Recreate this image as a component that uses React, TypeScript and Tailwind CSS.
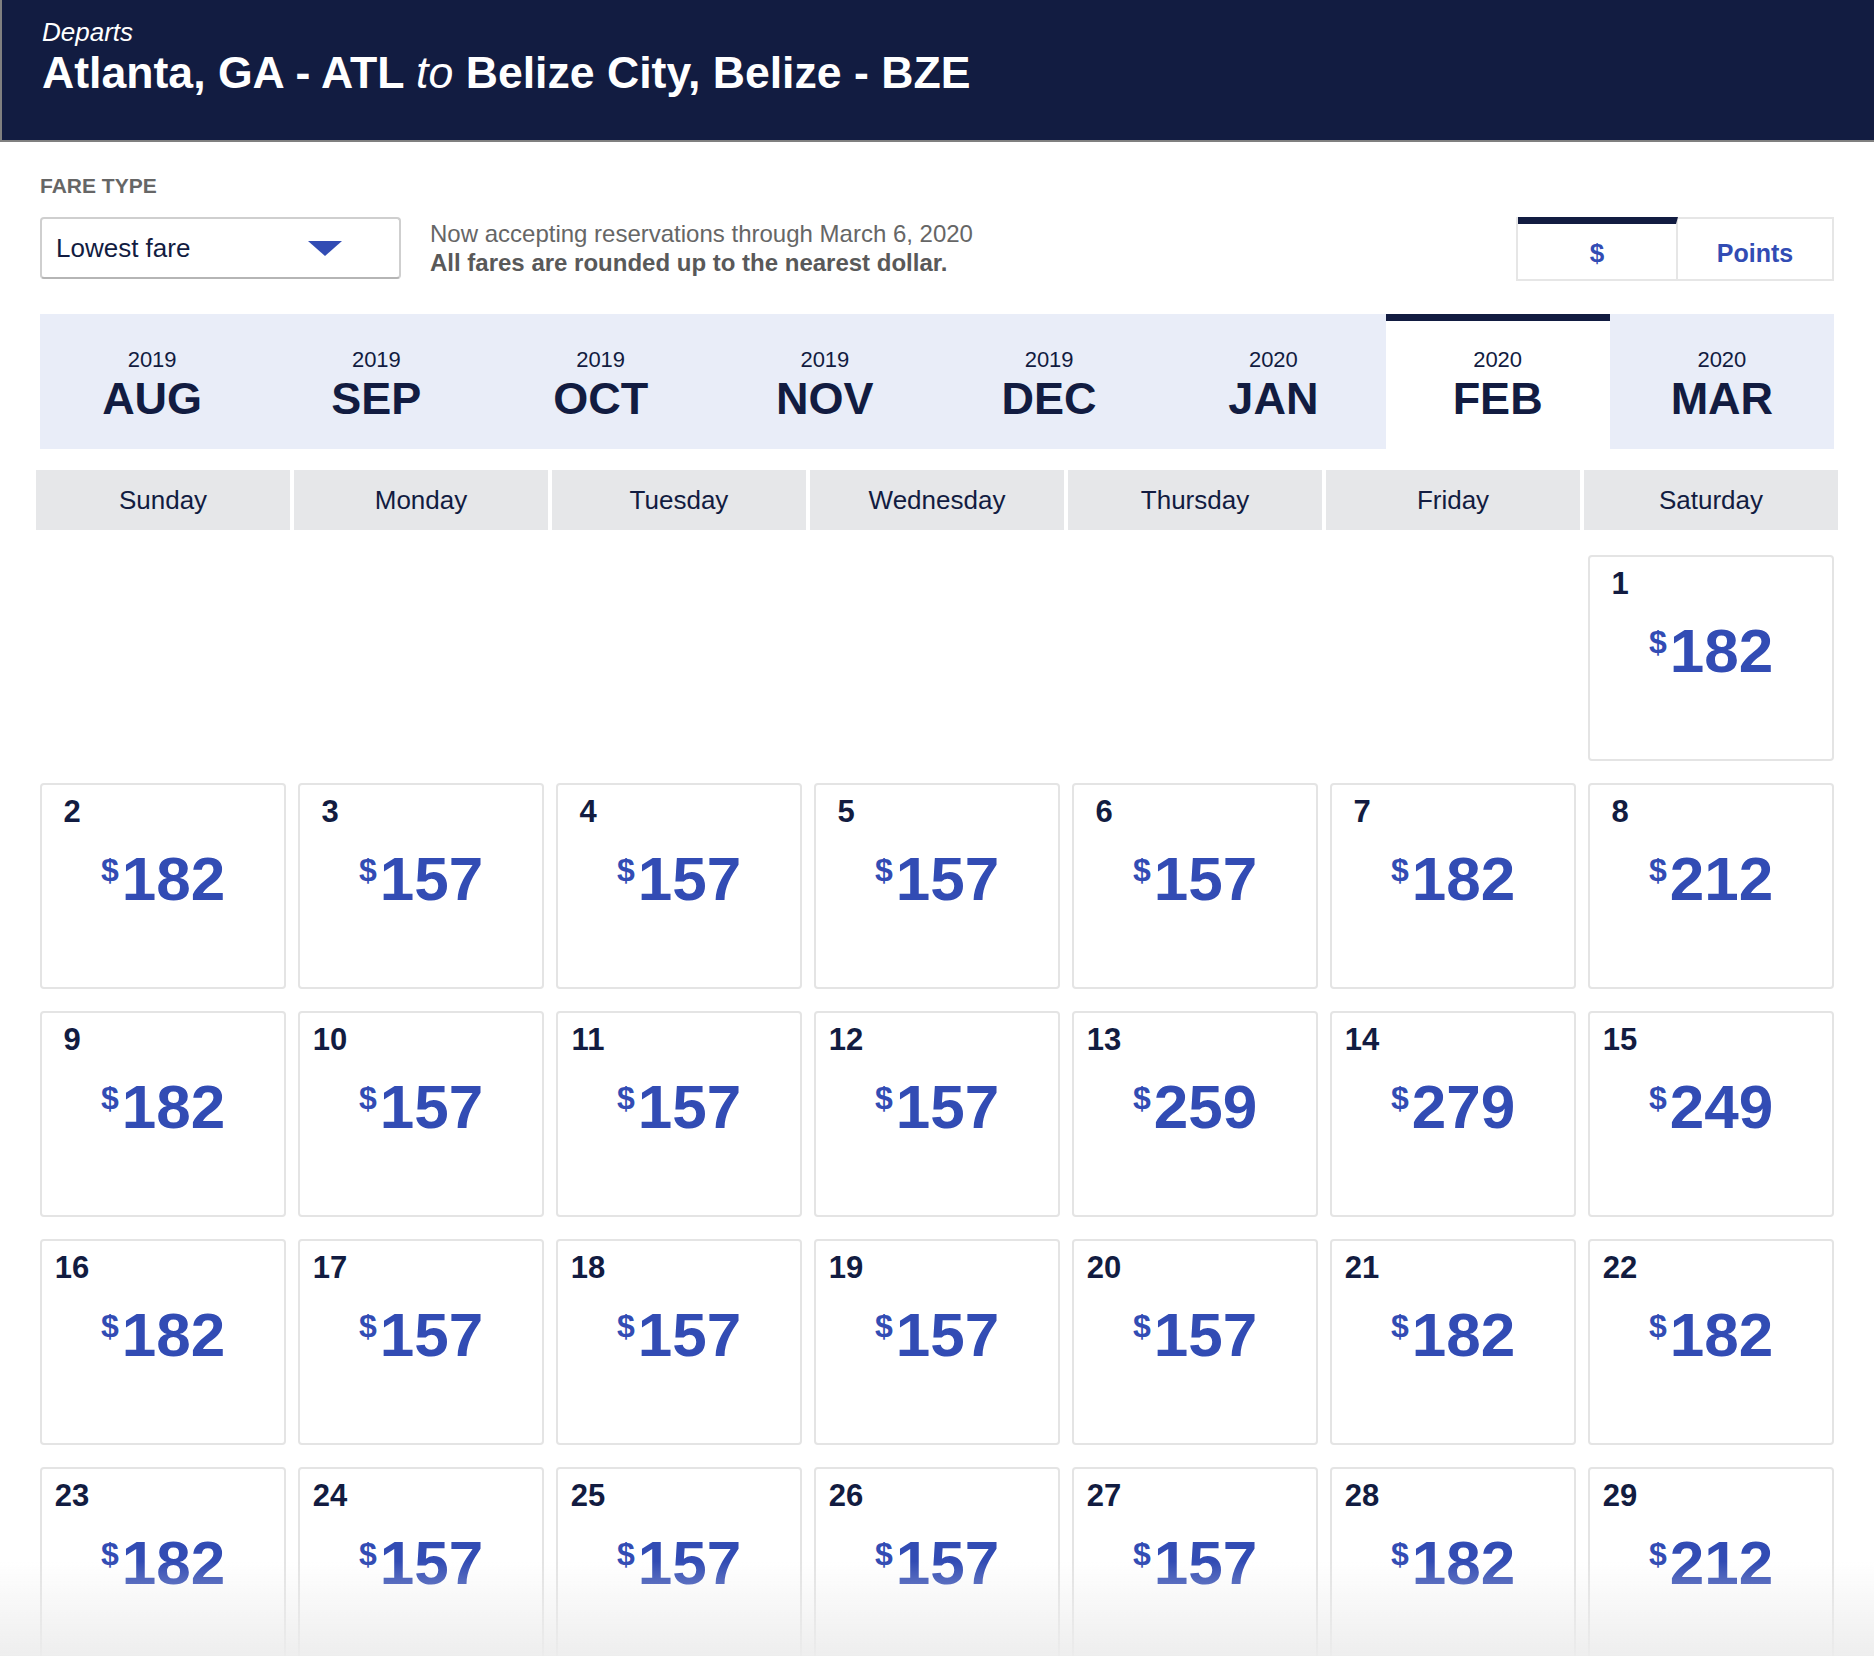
import React from "react";

type Cell = { d: number; p: number } | null;

const rows: Cell[][] = [
  [null, null, null, null, null, null, { d: 1, p: 182 }],
  [
    { d: 2, p: 182 },
    { d: 3, p: 157 },
    { d: 4, p: 157 },
    { d: 5, p: 157 },
    { d: 6, p: 157 },
    { d: 7, p: 182 },
    { d: 8, p: 212 },
  ],
  [
    { d: 9, p: 182 },
    { d: 10, p: 157 },
    { d: 11, p: 157 },
    { d: 12, p: 157 },
    { d: 13, p: 259 },
    { d: 14, p: 279 },
    { d: 15, p: 249 },
  ],
  [
    { d: 16, p: 182 },
    { d: 17, p: 157 },
    { d: 18, p: 157 },
    { d: 19, p: 157 },
    { d: 20, p: 157 },
    { d: 21, p: 182 },
    { d: 22, p: 182 },
  ],
  [
    { d: 23, p: 182 },
    { d: 24, p: 157 },
    { d: 25, p: 157 },
    { d: 26, p: 157 },
    { d: 27, p: 157 },
    { d: 28, p: 182 },
    { d: 29, p: 212 },
  ],
];

const months = [
  { y: "2019", m: "AUG" },
  { y: "2019", m: "SEP" },
  { y: "2019", m: "OCT" },
  { y: "2019", m: "NOV" },
  { y: "2019", m: "DEC" },
  { y: "2020", m: "JAN" },
  { y: "2020", m: "FEB", active: true },
  { y: "2020", m: "MAR" },
];

const days = ["Sunday", "Monday", "Tuesday", "Wednesday", "Thursday", "Friday", "Saturday"];

function DayCell({ c }: { c: Cell }) {
  if (!c) return <div className="h-[206px]" />;
  return (
    <div className="h-[206px] mx-[4px] border-2 border-[#e4e4e4] rounded-[4px] bg-white pt-[10px] flex flex-col">
      <div className="ml-[8px] w-[44px] text-center text-[31px] leading-[34px] font-bold text-[#121c41]">
        {c.d}
      </div>
      <div className="mt-[19px] flex justify-center items-start text-[#324cb4] font-bold">
        <span className="text-[32px] leading-[32px] mt-[6px] mr-[3px]">$</span>
        <span className="text-[62px] leading-[62px]">{c.p}</span>
      </div>
    </div>
  );
}

export default function App() {
  return (
    <div
      className="min-h-screen bg-white relative overflow-hidden"
      style={{ fontFamily: '"Liberation Sans", Arial, Helvetica, sans-serif' }}
    >
      {/* Header */}
      <div className="h-[142px] bg-[#121c41] border-l-2 border-b-2 border-[#808080] pl-[40px] pt-[17px] text-white">
        <div className="italic text-[26px] leading-[30px]">Departs</div>
        <div className="mt-[2px] text-[44.6px] leading-[48px] font-bold">
          Atlanta, GA - ATL <span className="italic font-normal">to</span> Belize City, Belize - BZE
        </div>
      </div>

      {/* Fare type */}
      <div className="px-[40px] pt-[32px]">
        <div className="text-[21px] leading-[24px] font-bold text-[#666666]">FARE TYPE</div>
        <div className="mt-[19px] flex items-start">
          <div className="w-[361px] h-[62px] border-2 border-[#cfcfcf] border-b-[#b5b5b5] rounded-[4px] flex items-center justify-between pl-[14px] pr-[57px] bg-white">
            <span className="text-[26px] text-[#121c41]">Lowest fare</span>
            <svg width="34" height="15" viewBox="0 0 34 15">
              <polygon points="0,0 34,0 17,15" fill="#324cb4" />
            </svg>
          </div>
          <div className="ml-[29px] h-[62px] flex flex-col justify-center text-[24px] leading-[29px]">
            <div className="text-[#666666]">Now accepting reservations through March 6, 2020</div>
            <div className="font-bold text-[#595959]">All fares are rounded up to the nearest dollar.</div>
          </div>
          <div className="ml-auto w-[318px] h-[64px] border-2 border-[#e6e6e6] flex">
            <div className="w-[160px] border-t-[7px] border-t-[#121c41] -mt-[2px] pt-[4px] flex items-center justify-center text-[26px] font-bold text-[#324cb4] border-r-2 border-r-[#e6e6e6]">
              $
            </div>
            <div className="flex-1 pt-[9px] flex items-center justify-center text-[25px] font-bold text-[#324cb4]">
              Points
            </div>
          </div>
        </div>
      </div>

      {/* Calendar */}
      <div className="px-[36px] mt-[33px]">
        <div className="mx-[4px] h-[135px] bg-[#e9edf8] grid grid-cols-8">
          {months.map((mo) =>
            mo.active ? (
              <div
                key={mo.m}
                className="bg-white border-t-[7px] border-[#121c41] flex flex-col items-center pt-[26px] text-[#121c41]"
              >
                <div className="text-[22px] leading-[26px]">{mo.y}</div>
                <div className="mt-[3px] text-[45px] leading-[45px] font-bold">{mo.m}</div>
              </div>
            ) : (
              <div key={mo.m} className="flex flex-col items-center pt-[33px] text-[#121c41]">
                <div className="text-[22px] leading-[26px]">{mo.y}</div>
                <div className="mt-[3px] text-[45px] leading-[45px] font-bold">{mo.m}</div>
              </div>
            )
          )}
        </div>

        <div className="mt-[21px] grid grid-cols-7 gap-[4px]">
          {days.map((d) => (
            <div
              key={d}
              className="h-[60px] bg-[#e6e7e9] flex items-center justify-center text-[26px] text-[#121c41]"
            >
              {d}
            </div>
          ))}
        </div>

        <div className="mt-[25px] flex flex-col gap-[22px]">
          {rows.map((r, i) => (
            <div key={i} className="grid grid-cols-7 gap-[4px]">
              {r.map((c, j) => (
                <DayCell key={j} c={c} />
              ))}
            </div>
          ))}
        </div>
      </div>

      {/* bottom fade */}
      <div className="pointer-events-none fixed left-0 right-0 bottom-0 h-[95px] bg-linear-to-b from-[rgba(238,238,238,0)] to-[rgba(236,236,236,0.9)]" />
    </div>
  );
}
